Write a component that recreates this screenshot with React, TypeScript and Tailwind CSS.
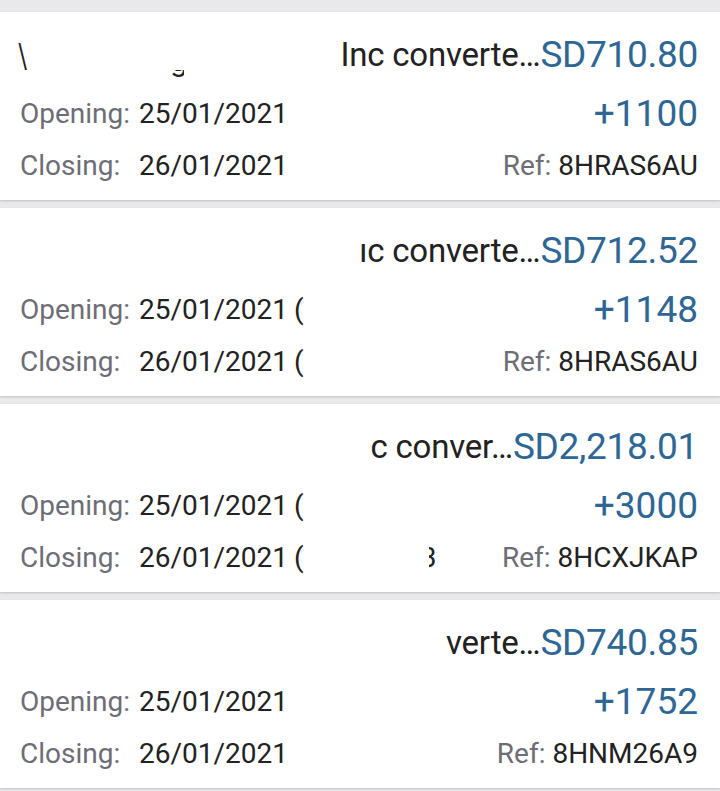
import React from "react";

type Card = {
  title: string;
  amount: string;
  change: string;
  ref: string;
  paren: boolean;
  frag?: boolean;
  first?: boolean;
};

const cards: Card[] = [
  { title: "Inc converte…", amount: "SD710.80", change: "+1100", ref: "8HRAS6AU", paren: false, first: true },
  { title: "ıc converte…", amount: "SD712.52", change: "+1148", ref: "8HRAS6AU", paren: true },
  { title: "c conver…", amount: "SD2,218.01", change: "+3000", ref: "8HCXJKAP", paren: true, frag: true },
  { title: "verte…", amount: "SD740.85", change: "+1752", ref: "8HNM26A9", paren: false },
];

function Row({ c }: { c: Card }) {
  return (
    <div className="relative bg-white shadow-[0_1px_2px_rgba(0,0,0,0.18)] h-[188px] pl-[20px] pr-[22px] pt-[21px] flex flex-col">
      <div className="h-[44px] flex items-center justify-between">
        <div className="flex items-start h-full pt-[4px]">
          {c.first && (
            <>
              <span className="text-[22px] text-[#222] leading-none -ml-[2px] scale-y-[1.6] origin-top mt-[2px]">\</span>
              <span className="relative ml-[143px] mt-[33px] h-[7px] w-[14px] overflow-hidden">
                <span className="absolute left-0 bottom-[1px] text-[32px] leading-none text-[#222]">g</span>
              </span>
            </>
          )}
        </div>
        <div className="flex items-center whitespace-nowrap">
          <span className="text-[33px] text-[#222] tracking-[-0.2px]">{c.title}</span>
          <span className="text-[37px] text-[#2e6694] tracking-[-0.3px]">{c.amount}</span>
        </div>
      </div>
      <div className="mt-[15px] h-[44px] flex items-center justify-between">
        <div className="flex items-center text-[28px]">
          <span className="w-[119px] text-[#6d6d75]">Opening:</span>
          <span className="text-[#222]">25/01/2021</span>
          {c.paren && <span className="text-[#222] ml-[6px]">(</span>}
        </div>
        <span className="text-[37px] text-[#2e6694]">{c.change}</span>
      </div>
      <div className="mt-[8px] h-[44px] flex items-center justify-between">
        <div className="flex items-center text-[28px]">
          <span className="w-[119px] text-[#6d6d75]">Closing:</span>
          <span className="text-[#222]">26/01/2021</span>
          {c.paren && <span className="text-[#222] ml-[6px]">(</span>}
          {c.frag && (
            <span className="ml-[125px] w-[8px] overflow-hidden inline-flex justify-end text-[#222]">3</span>
          )}
        </div>
        <div className="text-[28px] whitespace-nowrap">
          <span className="text-[#6d6d75]">Ref: </span>
          <span className="text-[#222]">{c.ref}</span>
        </div>
      </div>
    </div>
  );
}

export default function App() {
  return (
    <div
      className="min-h-screen bg-[#e9e9eb] pt-[12px] flex flex-col gap-[8px]"
      style={{ fontFamily: "Roboto, 'Noto Sans', sans-serif" }}
    >
      {cards.map((c, i) => (
        <Row key={i} c={c} />
      ))}
    </div>
  );
}
